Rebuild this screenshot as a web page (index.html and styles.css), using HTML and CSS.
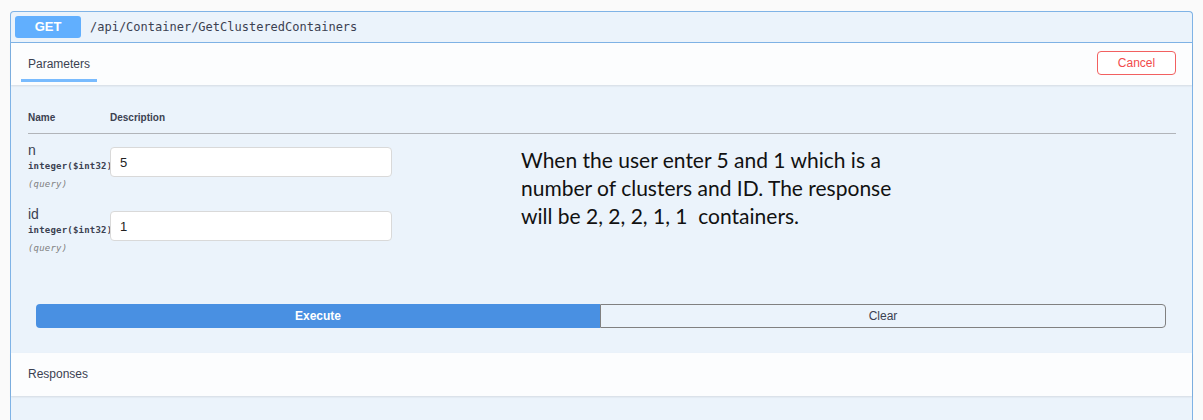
FILE: index.html
```html
<!DOCTYPE html>
<html>
<head>
<meta charset="utf-8">
<link rel="stylesheet" href="styles.css">
</head>
<body>
<div class="opblock">
  <div class="summary">
    <span class="method">GET</span>
    <span class="path">/api/Container/GetClusteredContainers</span>
  </div>
  <div class="section-header">
    <div class="tab">
      <span class="tab-label">Parameters</span>
      <span class="tab-line"></span>
    </div>
    <button class="cancel">Cancel</button>
  </div>
  <div class="params">
    <div class="thead">
      <span class="col-name">Name</span>
      <span>Description</span>
    </div>
    <div class="body-wrap">
      <div class="rows">
        <div class="row">
          <div class="name-col">
            <div class="pname">n</div>
            <div class="ptype">integer($int32)</div>
            <div class="pin">(query)</div>
          </div>
          <input class="pinput" type="text" value="5">
        </div>
        <div class="row">
          <div class="name-col">
            <div class="pname">id</div>
            <div class="ptype">integer($int32)</div>
            <div class="pin">(query)</div>
          </div>
          <input class="pinput" type="text" value="1">
        </div>
      </div>
      <p class="note">When the user enter 5 and 1 which is a number of clusters and ID. The response will be 2, 2, 2, 1, 1&nbsp; containers.</p>
    </div>
    <div class="actions">
      <button class="execute">Execute</button>
      <button class="clear">Clear</button>
    </div>
  </div>
  <div class="responses-header">Responses</div>
  <div class="responses-body"></div>
</div>
</body>
</html>
```

FILE: styles.css
```css
html, body {
  margin: 0;
  padding: 0;
  background: #fafafa;
  overflow: hidden;
  font-family: "Liberation Sans", Arial, sans-serif;
  color: #3b4151;
}

.opblock {
  margin: 11px 10px 0 10px;
  border: 1px solid #7fb3e6;
  border-bottom: none;
  border-radius: 4px 4px 0 0;
  background: #ebf3fb;
}

.summary {
  display: flex;
  align-items: center;
  padding: 4px;
  border-bottom: 1px solid #7fb3e6;
}

.method {
  width: 66px;
  height: 22px;
  line-height: 22px;
  text-align: center;
  background: #61affe;
  color: #fff;
  font-weight: 700;
  font-size: 13px;
  border-radius: 3px;
}

.path {
  margin-left: 9px;
  font-family: "DejaVu Sans Mono", "Liberation Mono", monospace;
  font-size: 12px;
  color: #3b4151;
}

.section-header {
  display: flex;
  justify-content: space-between;
  align-items: flex-start;
  height: 42px;
  padding: 0 16px 0 10px;
  background: #fcfdfe;
  box-shadow: 0 1px 2px rgba(0, 0, 0, 0.1);
  position: relative;
}

.tab {
  display: flex;
  flex-direction: column;
  padding-top: 13px;
}

.tab-label {
  font-size: 12px;
  line-height: 16px;
  padding: 0 7px;
}

.tab-line {
  margin-top: 7px;
  height: 3px;
  background: #61affe;
  opacity: 0.85;
}

.cancel {
  margin-top: 8px;
  width: 79px;
  height: 24px;
  border: 1.5px solid #f26060;
  border-radius: 4px;
  background: #fff;
  color: #f24b4b;
  font-family: "Liberation Sans", Arial, sans-serif;
  font-size: 12px;
  padding: 0;
}

.params {
  padding: 27px 16px 25px 17px;
}

.thead {
  display: flex;
  font-size: 10px;
  font-weight: 700;
  line-height: 12px;
  padding-bottom: 9px;
  border-bottom: 1px solid #b1b4b9;
}

.col-name {
  width: 82px;
}

.body-wrap {
  display: flex;
  margin-top: 8px;
}

.rows {
  width: 493px;
}

.row {
  display: flex;
  align-items: flex-start;
  margin-bottom: 14px;
}

.name-col {
  width: 82px;
  white-space: nowrap;
}

.pname {
  font-size: 14px;
  line-height: 16px;
}

.ptype {
  font-family: "DejaVu Sans Mono", "Liberation Mono", monospace;
  font-size: 9px;
  letter-spacing: 0.2px;
  font-weight: 700;
  line-height: 16px;
  color: #3b4151;
}

.pin {
  font-family: "DejaVu Sans Mono", "Liberation Mono", monospace;
  font-size: 9px;
  letter-spacing: 0.2px;
  font-style: italic;
  line-height: 16px;
  color: #808080;
  margin-top: 2px;
}

.pinput {
  margin-top: 5px;
  width: 282px;
  height: 30px;
  box-sizing: border-box;
  border: 1px solid #d9d9d9;
  border-radius: 4px;
  background: #fff;
  padding: 0 9px;
  font-family: "Liberation Sans", Arial, sans-serif;
  font-size: 13px;
  color: #222;
}

.note {
  margin: 4px 0 0 0;
  width: 385px;
  font-family: "Lato", "Open Sans", sans-serif;
  font-size: 21px;
  line-height: 28px;
  color: #111;
}

.actions {
  display: flex;
  margin: 34px 10px 0 8px;
}

.execute, .clear {
  flex: 1;
  height: 24px;
  font-family: "Liberation Sans", Arial, sans-serif;
  font-size: 12px;
  padding: 0;
}

.execute {
  background: #4990e2;
  color: #fff;
  font-weight: 700;
  border: none;
  border-radius: 4px 0 0 4px;
}

.clear {
  background: transparent;
  color: #3b4151;
  border: 1px solid #808080;
  border-radius: 0 4px 4px 0;
}

.responses-header {
  height: 43px;
  line-height: 43px;
  padding-left: 17px;
  font-size: 12px;
  background: #fcfdfe;
  box-shadow: 0 1px 2px rgba(0, 0, 0, 0.1);
}

.responses-body {
  height: 40px;
}
```
